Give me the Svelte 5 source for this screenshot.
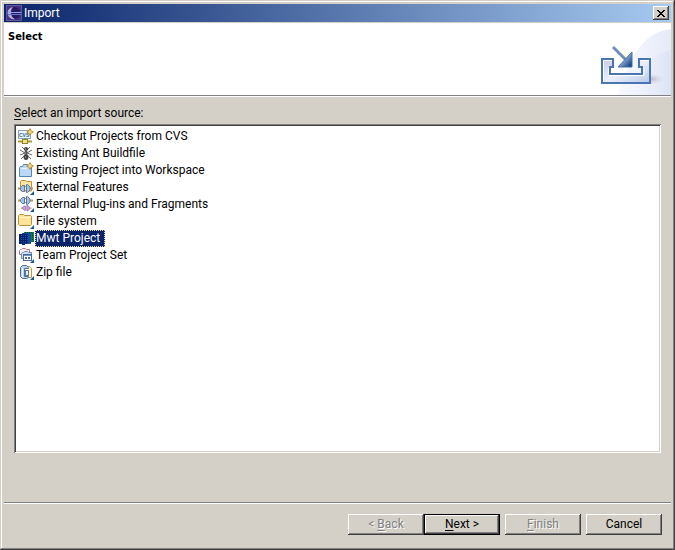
<script>
  let selected = $state("mwt");

  const sources = [
    { id: "cvs", label: "Checkout Projects from CVS" },
    { id: "ant", label: "Existing Ant Buildfile" },
    { id: "project", label: "Existing Project into Workspace" },
    { id: "features", label: "External Features" },
    { id: "plugins", label: "External Plug-ins and Fragments" },
    { id: "files", label: "File system" },
    { id: "mwt", label: "Mwt Project" },
    { id: "team", label: "Team Project Set" },
    { id: "zip", label: "Zip file" },
  ];
</script>

{#snippet sparkle()}
  <path d="M12 0l1.5 2.5L16 4l-2.500 1.500L12 8l-1.500-2.500L8 4l2.500-1.500z" fill="#b8891c" />
  <path d="M12 2v4M10 4h4" stroke="#fff3a8" />
{/snippet}

{#snippet corner()}
  <path d="M16 12v4h-4z" fill="#175a92" />
{/snippet}

{#snippet plug(color, dark)}
  <path d="M0 4.500h3M12 4.500h3" stroke="#c09a48" stroke-width="2" />
  <path d="M2.500 3.500l2-2h2v6h-2l-2-2z" fill={color} stroke={dark} />
  <path d="M8.500 .5h1l2.500 2.500v3L9.500 8.500h-1z" fill={color} stroke={dark} />
  <path d="M7 2.500h1M7 6.500h1" stroke="#c79a3a" />
{/snippet}

<div class="dialog" role="dialog" aria-labelledby="title">
  <div class="titlebar">
    <svg class="logo" width="16" height="16" viewBox="0 0 16 16">
      <rect width="16" height="16" fill="#443285" />
      <rect x=".5" y=".5" width="15" height="15" fill="none" stroke="#65549a" />
      <circle cx="8.5" cy="8" r="6" fill="#29195e" />
      <path d="M7 2C2 3 1 7 2 10s4 5 7 4C4 12 4 5 7 2z" fill="#b3b0e0" />
      <path d="M2 7.500h13" stroke="#8fa4ee" />
      <path d="M2 9.500h13" stroke="#6277cf" />
    </svg>
    <span id="title">Import</span>
    <button class="close" aria-label="Close">
      <svg width="8" height="7" viewBox="0 0 8 7" shape-rendering="crispEdges">
        <path
          d="M0 0h2v1h1v1h2V1h1V0h2v1H7v1H6v1H5v1h1v1h1v1h1v1H6V6H5V5H3v1H2v1H0V6h1V5h1V4h1V3H2V2H1V1H0z"
        />
      </svg>
    </button>
  </div>

  <header>
    <h1>Select</h1>
    <svg class="banner" width="75" height="72" viewBox="0 0 75 72">
      <defs>
        <linearGradient id="sweep" x1="0" y1="0" x2="1" y2="0">
          <stop offset="0" stop-color="#f8f9fe" />
          <stop offset="1" stop-color="#e6ebf8" />
        </linearGradient>
        <linearGradient id="sweep2" x1="0" y1="0" x2="1" y2="0">
          <stop offset="0" stop-color="#eef1fa" stop-opacity="0" />
          <stop offset="1" stop-color="#dbe3f5" />
        </linearGradient>
        <linearGradient id="tray" x1="0" y1="0" x2="1" y2="1">
          <stop offset="0" stop-color="#c5cbe6" />
          <stop offset=".5" stop-color="#eceffa" />
          <stop offset="1" stop-color="#b9cae6" />
        </linearGradient>
        <linearGradient id="head" x1="0" y1="0" x2="1" y2="1">
          <stop offset=".4" stop-color="#9cb8dc" />
          <stop offset=".9" stop-color="#164383" />
        </linearGradient>
        <radialGradient id="glow">
          <stop offset="0" stop-color="#fff8b8" />
          <stop offset="1" stop-color="#fff" stop-opacity="0" />
        </radialGradient>
        <radialGradient id="shade">
          <stop offset="0" stop-color="#b9aebd" />
          <stop offset="1" stop-color="#dfe4f3" stop-opacity="0" />
        </radialGradient>
      </defs>
      <path d="M75 6C51 9 35 27 22 72h53z" fill="url(#sweep)" />
      <path d="M75 27C55 32 44 45 36 72h39z" fill="url(#sweep2)" />
      <ellipse cx="54" cy="56" rx="16" ry="6" fill="url(#shade)" />
      <circle cx="30" cy="35" r="10" fill="url(#glow)" />
      <path
        d="M6 36h11v8h-3v7h32v-7h-3v-8h11v24H6z"
        fill="url(#tray)"
        stroke="#4975b3"
        stroke-width="2"
      />
      <path d="M7.500 59V37.500H16M44.500 37.500H53M12.500 45v7.500H48V45" stroke="#fff" fill="none" />
      <path d="M17 24l14 14" stroke="#6f90be" stroke-width="3" />
      <path d="M36 29v15H22z" fill="url(#head)" />
      <path d="M36 29v15H22z" fill="none" stroke="#4270ad" stroke-width="1" />
    </svg>
  </header>

  <main>
    <div class="label" id="source-label"><u>S</u>elect an import source:</div>
    <div class="list" role="listbox" aria-labelledby="source-label">
      {#each sources as source (source.id)}
        <button
          class="row"
          class:selected={selected === source.id}
          role="option"
          aria-selected={selected === source.id}
          onclick={() => (selected = source.id)}
        >
          <svg width="17" height="17" viewBox="0 0 17 17">
            {#if source.id === "cvs"}
              <rect x=".5" y="2.500" width="12" height="8" fill="#edf5fb" stroke="#8aa7bc" />
              <text x="1" y="9" class="tiny">CVS</text>
              <path d="M0 13.500h14" stroke="#a49a31" stroke-width="2" />
              <path d="M7 10v2" stroke="#858332" />
              <rect x="4.500" y="11.500" width="5" height="4" fill="#efe28b" stroke="#8f8126" />
              {@render sparkle()}
            {:else if source.id === "ant"}
              <path
                d="M4 2l3 3M12 2L9 5M2 5l5 3M14 5L9 8M2 10l5-2M14 10L9 8M3 14l4-4M13 14l-4-4"
                stroke="#6b6b6b"
                fill="none"
              />
              <ellipse cx="8" cy="4" rx="2" ry="2" fill="#444" />
              <ellipse cx="8" cy="7.500" rx="1.500" ry="2" fill="#555" />
              <ellipse cx="8" cy="12" rx="2.500" ry="3" fill="#444" />
              <path d="M7 4h1M7 8h1M7 12h1" stroke="#aaa" />
            {:else if source.id === "project"}
              <path
                d="M1.500 14.500v-9l1-1h2l1-2h4l1 2h3v10z"
                fill="#b9d9f4"
                stroke="#5684b4"
              />
              <path d="M3 6.500h6" stroke="#e8f5ff" />
              {@render sparkle()}
            {:else if source.id === "features"}
              <path d="M2.500 10V2.500l1-1h4l1 1h5V12H3z" fill="#ffe7a3" stroke="#c48d35" />
              <g transform="translate(0 5)">{@render plug("#a8c4e5", "#5579ad")}</g>
              {@render corner()}
            {:else if source.id === "plugins"}
              {@render plug("#a8c4e5", "#5579ad")}
              <g transform="translate(3 9) scale(.7)">{@render plug("#d0a5e8", "#9059bb")}</g>
              {@render corner()}
            {:else if source.id === "files"}
              <path
                d="M.5 11.500v-9l1-1h4l1 1h6l1 1v8l-1 1h-11z"
                fill="#ffe49a"
                stroke="#c38b32"
              />
              <path d="M1 4.500h12" stroke="#fff6cf" />
              {@render corner()}
            {:else if source.id === "mwt"}
              <g shape-rendering="crispEdges">
                <path d="M6 2h10v10h-3v2H6z" fill="#148044" />
                <path d="M4 3h9v10h-2v1H4z" fill="#1645a5" />
                <path d="M1 4h9v10H7v1H4v-1H1z" fill="#08206c" />
                <path
                  d="M3.500 5v9M5.500 5v9M7.500 5v9M9.500 5v9M11.500 4v8"
                  stroke="#1e50b0"
                  stroke-dasharray="1 1"
                />
                <path d="M7 2.500h8M14.500 3v8" stroke="#083c35" stroke-dasharray="1 1" />
              </g>
            {:else if source.id === "team"}
              <path d="M1.500 7.500v-4l1-1h1l1-1h3l1 1h3v5z" fill="#f6ebef" stroke="#b47880" />
              <path d="M3.500 11.500v-5l1-1h1l1-1h3l1 1h3v6z" fill="#cfe2f5" stroke="#668bb6" />
              <rect x="5.500" y="7.500" width="8" height="6" fill="#f8fbff" stroke="#456c9d" />
              <path d="M6 8.500h7" stroke="#6f94c4" />
              <path d="M7 11h2M10 11h2" stroke="#5c6c85" stroke-width="2" />
              {@render corner()}
            {:else}
              <path d="M6.500 2.500h5l2 2v9h-7z" fill="#fff5c7" stroke="#b99a50" />
              <path
                d="M2.500 3.500l2-2h4l2 2v1h-4v8h4v1l-2 1h-4l-2-2z"
                fill="#bed6ef"
                stroke="#49729f"
              />
              <path d="M4.500 4v9" stroke="#eff8ff" />
              <rect x="7.500" y="6.500" width="3" height="5" fill="#e2edf8" stroke="#587ba5" />
              {@render corner()}
            {/if}
          </svg>
          <span>{source.label}</span>
        </button>
      {/each}
    </div>
  </main>

  <footer>
    <div class="pair">
      <button disabled>&lt; <u>B</u>ack</button>
      <button class="default"><u>N</u>ext &gt;</button>
    </div>
    <button disabled><u>F</u>inish</button>
    <button>Cancel</button>
  </footer>
</div>

<style>
  :global(body) {
    background: #d4d0c8;
  }

  .dialog {
    display: flex;
    flex-direction: column;
    box-sizing: border-box;
    min-height: 100vh;
    padding: 4px;
    background: #d4d0c8;
    box-shadow:
      inset -1px -1px #404040,
      inset 1px 1px #d4d0c8,
      inset -2px -2px #808080,
      inset 2px 2px #fff;
    color: #000;
    font: 12px/17px Roboto, "Liberation Sans", sans-serif;
  }

  button {
    box-sizing: border-box;
    padding: 0;
    border: 0;
    border-radius: 0;
    background: #d4d0c8;
    color: inherit;
    font: inherit;
  }

  u {
    text-underline-offset: 2px;
  }

  .titlebar {
    display: flex;
    align-items: center;
    height: 18px;
    padding: 0 2px;
    background: linear-gradient(to right, #0a246a, #a6caf0);
    color: #fff;
  }

  .titlebar span {
    flex: 1;
    padding-left: 2px;
  }

  .close {
    display: flex;
    align-items: center;
    justify-content: center;
    width: 16px;
    height: 14px;
    box-shadow:
      inset -1px -1px #404040,
      inset 1px 1px #fff,
      inset -2px -2px #808080;
  }

  header {
    display: flex;
    justify-content: space-between;
    margin-top: 1px;
    border-bottom: 1px solid #808080;
    background: #fff;
    box-shadow: 0 1px #fff;
  }

  h1 {
    margin: 0;
    padding: 5px 4px;
    font: bold 11px/17px "DejaVu Sans Condensed", Tahoma, sans-serif;
  }

  .banner {
    display: block;
  }

  main {
    display: flex;
    flex: 1;
    flex-direction: column;
    padding: 9px 10px 49px;
  }

  .label {
    padding-bottom: 2px;
  }

  .list {
    flex: 1;
    padding: 4px 2px;
    background: #fff;
    box-shadow:
      inset 1px 1px #808080,
      inset -1px -1px #fff,
      inset 2px 2px #404040,
      inset -2px -2px #d4d0c8;
  }

  .row {
    display: flex;
    width: 100%;
    height: 17px;
    padding-left: 2px;
    background: none;
    text-align: left;
  }

  .row:focus {
    outline: none;
  }

  .row svg {
    flex: none;
    overflow: visible;
  }

  .row span {
    padding: 0 5px 0 1px;
  }

  .selected span {
    background: #0a246a;
    color: #fff;
    outline: 1px dotted #f5db95;
    outline-offset: -1px;
  }

  .tiny {
    fill: #2e6a91;
    font: bold 5px "Liberation Sans", Arial, sans-serif;
  }

  footer {
    display: flex;
    justify-content: flex-end;
    gap: 5px;
    padding: 11px 9px 11px;
    border-top: 1px solid #808080;
    box-shadow: inset 0 1px #fff;
  }

  .pair {
    display: flex;
  }

  footer button {
    width: 76px;
    height: 21px;
    box-shadow:
      inset -1px -1px #404040,
      inset 1px 1px #fff,
      inset -2px -2px #808080;
  }

  footer button:disabled {
    color: #808080;
    text-shadow: 1px 1px #fff;
  }

  footer .default {
    border: 1px solid #000;
  }
</style>
